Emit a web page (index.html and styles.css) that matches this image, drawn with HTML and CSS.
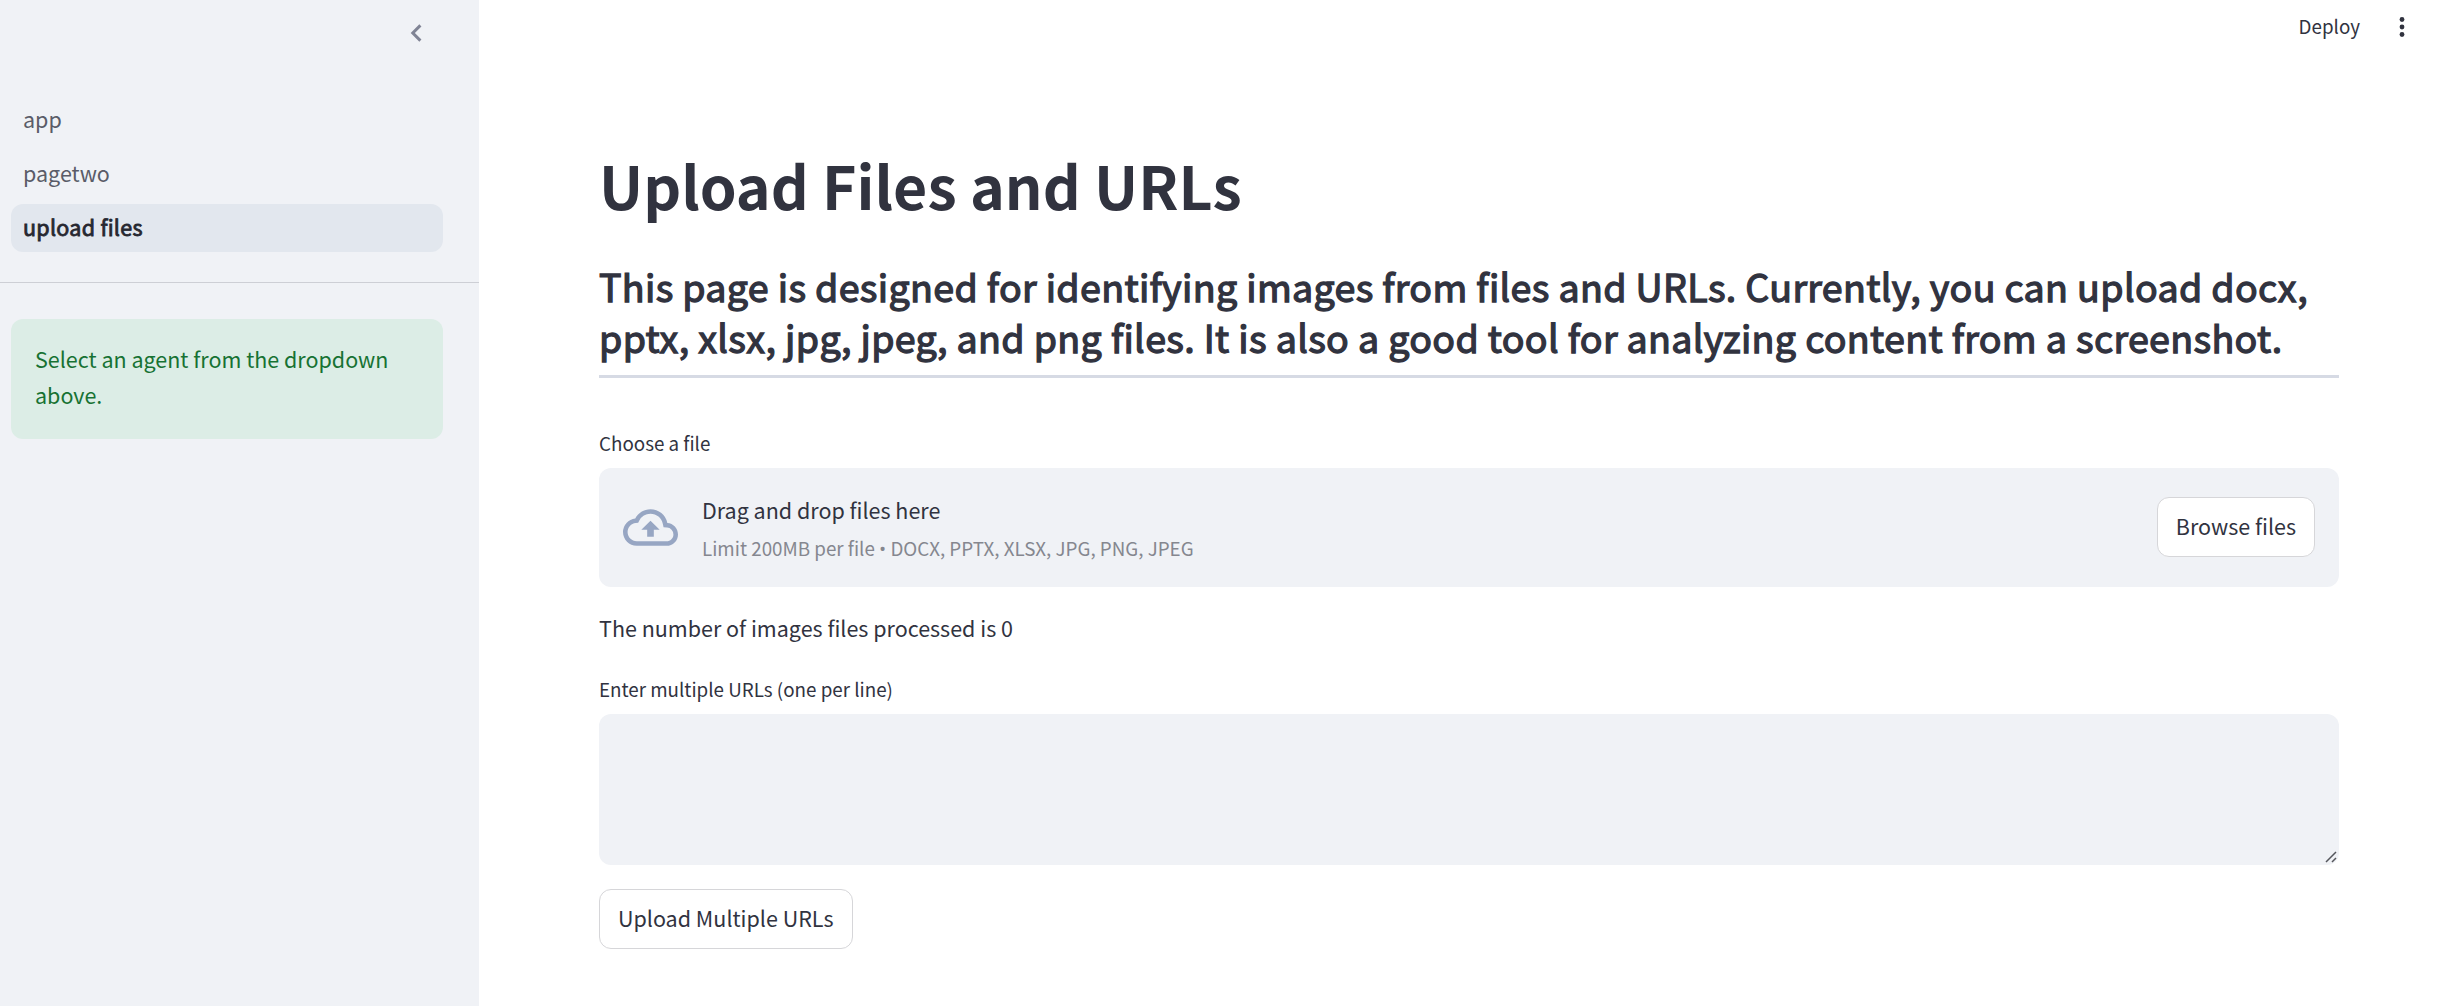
FILE: index.html
```html
<!DOCTYPE html>
<html lang="en">
<head>
<meta charset="utf-8">
<title>upload files</title>
<link rel="stylesheet" href="styles.css">
</head>
<body>
<div class="app">
  <aside class="sidebar">
    <div class="sidebar-header">
      <svg class="chevron" viewBox="0 0 12 18"><path d="M10.4 1.4 2.8 9l7.6 7.6" fill="none" stroke="#808495" stroke-width="3"/></svg>
    </div>
    <nav class="nav">
      <a class="nav-link">app</a>
      <a class="nav-link">pagetwo</a>
      <a class="nav-link active">upload files</a>
    </nav>
    <div class="alert">Select an agent from the dropdown above.</div>
  </aside>
  <main class="main">
    <header class="toolbar">
      <span class="deploy">Deploy</span>
      <svg class="dots" viewBox="0 0 6 20"><g fill="#31333f"><circle cx="3" cy="2.5" r="2.4"/><circle cx="3" cy="10" r="2.4"/><circle cx="3" cy="17.5" r="2.4"/></g></svg>
    </header>
    <section class="content">
      <h1 class="title">Upload Files and URLs</h1>
      <h3 class="intro">This page is designed for identifying images from files and URLs. Currently, you can upload docx,<br>pptx, xlsx, jpg, jpeg, and png files. It is also a good tool for analyzing content from a screenshot.</h3>
      <div class="label">Choose a file</div>
      <div class="dropzone">
        <svg class="cloud" viewBox="0 4 24 16"><path fill="#97a6c3" d="M19.35 10.04A7.49 7.49 0 0012 4C9.11 4 6.6 5.64 5.35 8.04A5.994 5.994 0 000 14c0 3.31 2.69 6 6 6h13c2.76 0 5-2.24 5-5 0-2.64-2.05-4.78-4.65-4.96zM19 18H6c-2.21 0-4-1.79-4-4 0-2.05 1.53-3.76 3.56-3.97l1.07-.11.5-.95A5.469 5.469 0 0112 6c2.62 0 4.88 1.86 5.39 4.43l.3 1.5 1.53.11A2.98 2.98 0 0122 15c0 1.65-1.35 3-3 3zM8 13h2.55v3h2.9v-3H16l-4-4-4 4z"/></svg>
        <div class="drop-text">
          <span class="drop-main">Drag and drop files here</span>
          <span class="drop-limit">Limit 200MB per file <span class="bullet">•</span> DOCX, PPTX, XLSX, JPG, PNG, JPEG</span>
        </div>
        <button class="button">Browse files</button>
      </div>
      <p class="status">The number of images files processed is 0</p>
      <div class="label url-label">Enter multiple URLs (one per line)</div>
      <div class="textarea">
        <svg class="grip" viewBox="0 0 12 12"><path d="M1 11 11 1M7 11l4-4" fill="none" stroke="#55565c" stroke-width="1.5"/></svg>
      </div>
      <button class="button upload">Upload Multiple URLs</button>
    </section>
  </main>
</div>
</body>
</html>
```
FILE: styles.css
```css
* { box-sizing: border-box; }
body {
  margin: 0;
  font-family: "Noto Sans CJK SC", "Noto Sans", sans-serif;
  font-size: 21.5px;
  line-height: 36px;
  color: #31333f;
  background: #fff;
  font-variant-ligatures: none;
}
.app { display: flex; height: 1006px; overflow: hidden; }
.sidebar { width: 479px; background: #f0f2f6; flex: none; }
.sidebar-header { display: flex; justify-content: flex-end; height: 96px; padding: 24px 57px 0 0; }
.chevron { width: 12px; height: 18px; }
.nav {
  display: flex;
  flex-direction: column;
  gap: 6px;
  height: 187px;
  padding: 0 36px 0 11px;
  border-bottom: 1px solid #cdcfd5;
}
.nav-link { height: 48px; line-height: 45px; padding-left: 12px; border-radius: 12px; color: #5a5c68; }
.nav-link.active { background: #e2e7ee; color: #262730; -webkit-text-stroke: 0.8px; letter-spacing: 0.28px; }
.alert {
  width: 432px;
  height: 120px;
  margin: 36px 0 0 11px;
  padding: 22px 24px;
  border-radius: 12px;
  background: #dcede6;
  color: #177233;
}
.main { flex: 1; min-width: 0; }
.toolbar { display: flex; justify-content: flex-end; align-items: center; gap: 39px; height: 54px; padding-right: 39px; }
.deploy { font-size: 18.8px; line-height: 48px; padding-bottom: 3px; }
.dots { width: 6px; height: 20px; }
.content { display: flex; flex-direction: column; align-items: stretch; padding: 91px 105px 0 120px; }
.title { margin: 0; height: 115px; font-size: 59px; line-height: 79px; font-weight: 700; }
.intro {
  margin: 0;
  height: 118px;
  font-size: 37.6px;
  line-height: 51px;
  font-weight: 400;
  letter-spacing: 0.335px;
  -webkit-text-stroke: 1.3px;
  white-space: nowrap;
  border-bottom: 3px solid #d6dae4;
}
.label { margin-top: 48px; height: 42px; font-size: 18.8px; line-height: 34px; }
.dropzone { display: flex; align-items: center; height: 119px; padding: 0 24px; background: #f0f2f6; border-radius: 12px; }
.cloud { width: 55px; height: 37px; }
.drop-text { display: flex; flex-direction: column; flex: 1; margin-left: 24px; }
.drop-limit { font-size: 18.8px; color: #85878f; padding-top: 2px; margin-bottom: -2px; }
.bullet { font-family: "Open Sans", sans-serif; font-size: 19px; line-height: 1; }
.button {
  height: 60px;
  padding: 0 18px 3px;
  border: 1px solid #d6d6d9;
  border-radius: 12px;
  background: #fff;
  font: inherit;
  color: inherit;
}
.dropzone .button { margin-bottom: 1px; }
.status { margin: 23px 0 0; }
.url-label { margin-top: 26px; }
.textarea { display: flex; justify-content: flex-end; align-items: flex-end; height: 151px; padding: 2px; background: #f0f2f6; border-radius: 12px; }
.grip { width: 12px; height: 12px; }
.upload { align-self: flex-start; margin-top: 24px; }
```
